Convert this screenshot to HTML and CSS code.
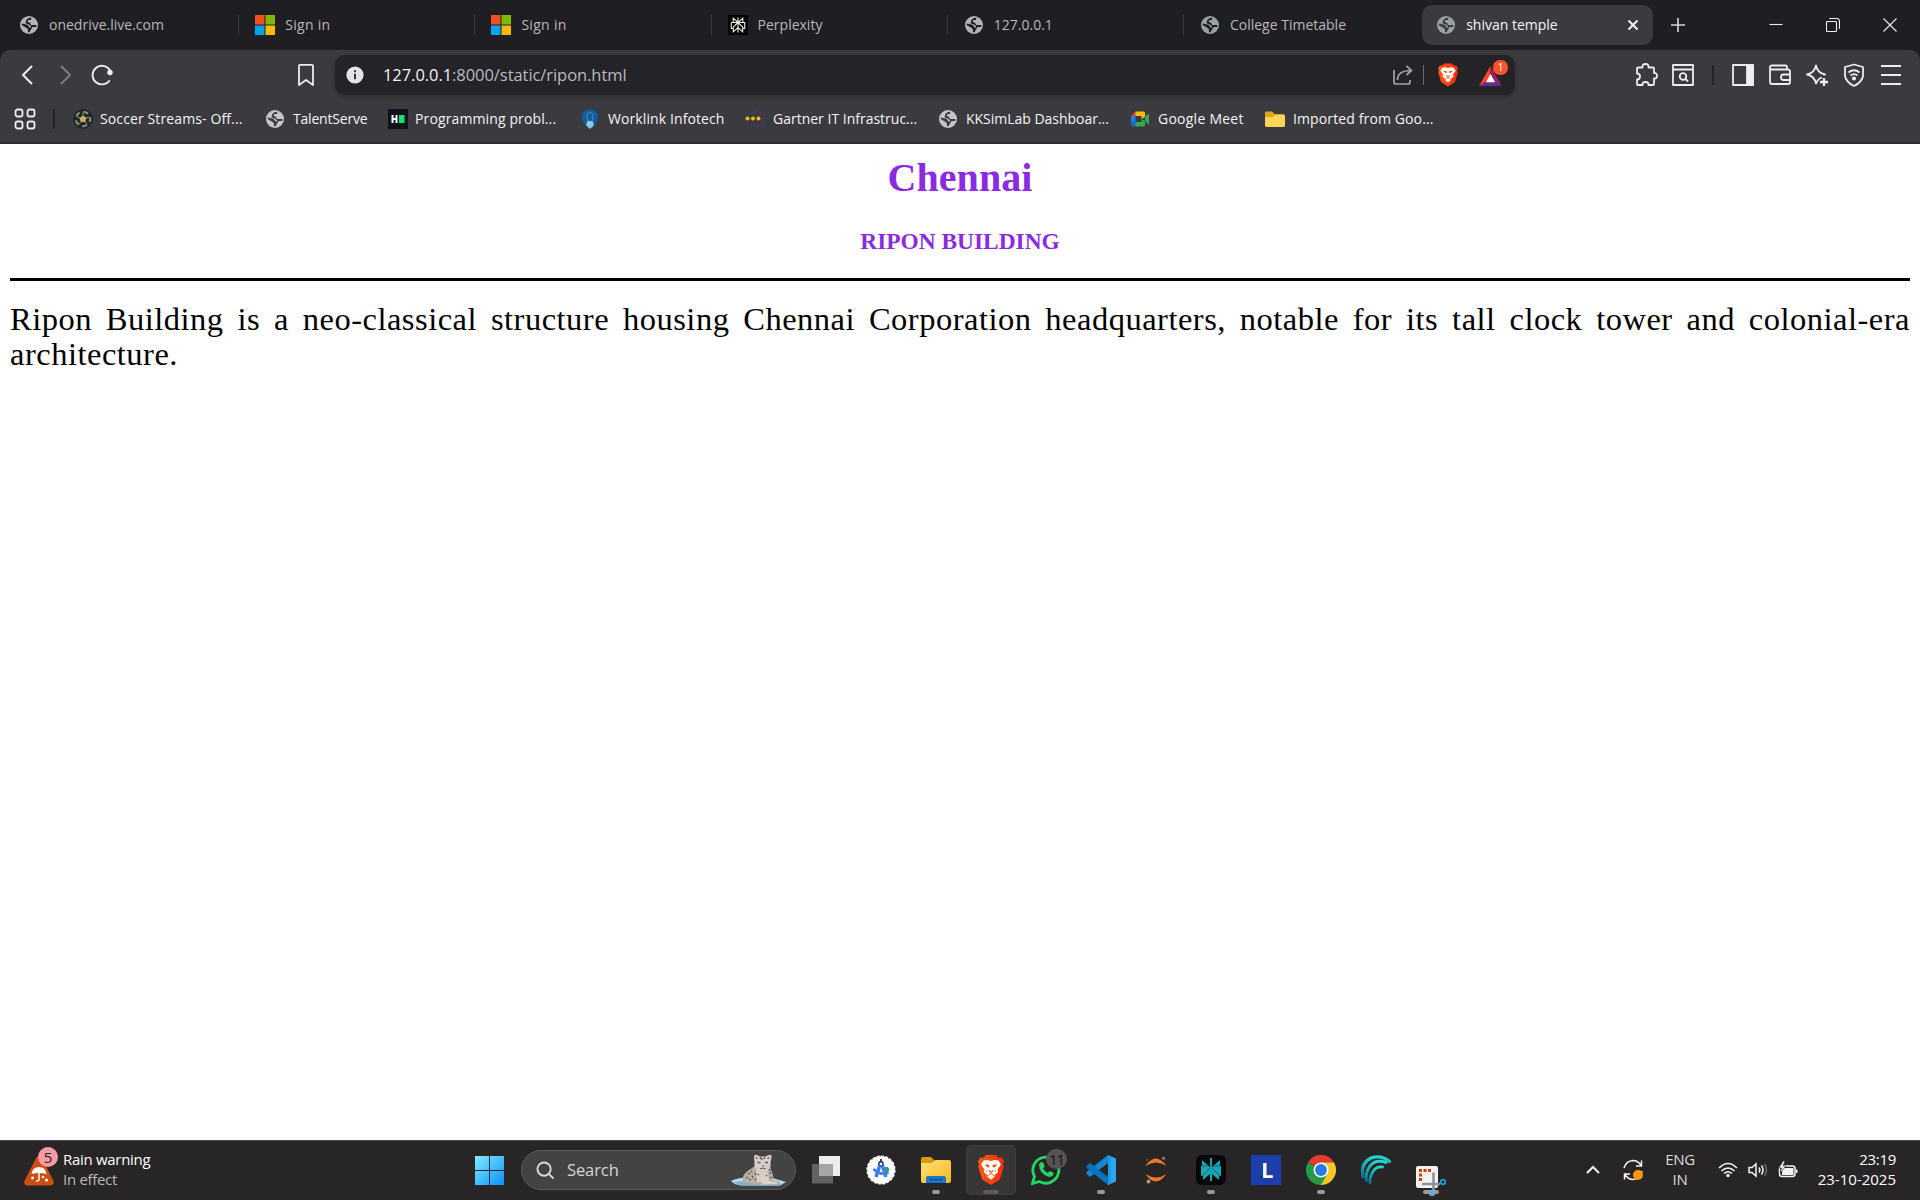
FILE: index.html
```html
<!DOCTYPE html>
<html lang="en">
<head>
<meta charset="utf-8">
<title>shivan temple</title>
<link rel="stylesheet" href="styles.css">
</head>
<body>
<svg class="defs" aria-hidden="true">
  <defs>
    <linearGradient id="win" x1="0" y1="0" x2="1" y2="1"><stop offset="0" stop-color="#7eeeff"/><stop offset="1" stop-color="#0a8fff"/></linearGradient>
    <linearGradient id="fold" x1="0" y1="0" x2="1" y2="1"><stop offset="0" stop-color="#ffe07a"/><stop offset="1" stop-color="#f8b81c"/></linearGradient>
    <linearGradient id="lion" x1="0" y1="0" x2="1" y2="0"><stop offset="0" stop-color="#ff5a10"/><stop offset="1" stop-color="#ff2a0c"/></linearGradient>
    <linearGradient id="teal" x1="0" y1="0" x2="0" y2="1"><stop offset="0" stop-color="#22d6d2"/><stop offset="1" stop-color="#08708c"/></linearGradient>
    <symbol id="globe" viewBox="0 0 20 20">
      <circle cx="10" cy="10" r="9" fill="currentColor"/>
      <path d="M12.500 2.800 11.800 5H9.500L8.500 7l2.500.8 1 2.200h5.500l-.3 2h-3.700l-1.500 2.500-1.500 2.700H9l-.2-3.200-2-1.500L2.600 10l.3-1.500 5.600 1.300 2 2.700h1.200l.4-1.200L9.800 9.500 6.500 8.200 7.300 5l2.500-2z" fill="var(--cut)"/>
    </symbol>
    <symbol id="ms" viewBox="0 0 20 20"><path fill="#f25022" d="M0 0h9.500v9.500H0z"/><path fill="#7fba00" d="M10.500 0H20v9.500h-9.500z"/><path fill="#00a4ef" d="M0 10.500h9.500V20H0z"/><path fill="#ffb900" d="M10.500 10.500H20V20h-9.500z"/></symbol>
    <symbol id="pplx" viewBox="0 0 20 20"><path d="M10 2.500v15M5.200 3.200 10 7.500l4.800-4.300v4.300H5.200zM3.300 7.500H10l-4.700 4.700v4.600L10 12.500l4.700 4.300v-4.600L10 7.500h6.700v6h-2M3.300 7.500v6h2" fill="none" stroke="currentColor" stroke-width="1.100"/></symbol>
    <symbol id="brave" viewBox="0 0 26 30">
      <path d="M8 0h10l2.500 2.800 3-.3L26 6l-1 3 .6 3-3.800 12.500L13 30 4.200 24.500.4 12 1 9 0 6l2.500-3.500 3 .3z" fill="url(#lion)"/>
      <path d="M5.500 5.500 9.500 5l3.500 1 3.500-1 4 .5 2.500 4-3.500 5 .7 2.400-3.800 3.600-2-1.500L13 18l-1.400 1-2 1.500-3.800-3.600.7-2.400-3.500-5zM9 21.500l4-2.500 4 2.500-4 3.300z" fill="#fff"/>
      <path d="m6.500 9.500 4.500.3.500 1.700-1.500 1.200zM19.500 9.500l-4.500.3-.5 1.700 1.500 1.200zM10.500 14.800 13 16.500l2.500-1.700-.5 2-2 1-2-1zM8 14.800l1.200 1.500-.7 1zM18 14.800l-1.200 1.500.7 1z" fill="#ff480f"/>
    </symbol>
  </defs>
</svg>

<header class="browser">
  <div class="tabstrip">
    <div class="tab"><svg class="fav grey"><use href="#globe"/></svg><span>onedrive.live.com</span></div>
    <div class="tab"><svg class="fav"><use href="#ms"/></svg><span class="wide">Sign in</span></div>
    <div class="tab"><svg class="fav"><use href="#ms"/></svg><span class="wide">Sign in</span></div>
    <div class="tab"><svg class="fav black"><use href="#pplx"/></svg><span>Perplexity</span></div>
    <div class="tab"><svg class="fav grey"><use href="#globe"/></svg><span>127.0.0.1</span></div>
    <div class="tab last"><svg class="fav blue"><use href="#globe"/></svg><span>College Timetable</span></div>
    <div class="tab active"><svg class="fav blue"><use href="#globe"/></svg><span>shivan temple</span>
      <svg class="x" viewBox="0 0 12 12"><path d="m1.500 1.500 9 9m0-9-9 9"/></svg></div>
    <svg class="plus" viewBox="0 0 16 16"><path d="M8 1v14M1 8h14"/></svg>
    <div class="winbtns">
      <svg viewBox="0 0 14 14"><path d="M.5 6.500h13"/></svg>
      <svg viewBox="0 0 14 14"><path d="M1.500 3.500h8q1 0 1 1v8q0 1-1 1h-8q-1 0-1-1v-8q0-1 1-1zM3.500 1q0-.5 1-.5h6q3 0 3 3v6q0 1-.7 1.200"/></svg>
      <svg viewBox="0 0 14 14"><path d="m.5.5 13 13m0-13-13 13"/></svg>
    </div>
  </div>

  <div class="panel">
    <div class="toolbar">
      <svg class="ic back" viewBox="0 0 24 24"><path d="M16 3 7 12l9 9"/></svg>
      <svg class="ic fwd" viewBox="0 0 24 24"><path d="m8 3 9 9-9 9"/></svg>
      <svg class="ic reload" viewBox="0 0 24 24"><path d="M20.500 8.500a9.300 9.300 0 1 0-.8 8.700"/><circle cx="20" cy="9.500" r="2.700" fill="#f0f0f2" stroke="none"/></svg>
      <svg class="ic mark" viewBox="0 0 24 24"><path d="M6 1.800h12q1 0 1 1V22l-7-5-7 5V2.800q0-1 1-1z"/></svg>
      <div class="url">
        <svg class="info" viewBox="0 0 18 18"><circle cx="9" cy="9" r="8.600" fill="#e4e3e8"/><path d="M9 7.800v5.500M9 4.200v2" stroke="#242328" stroke-width="1.800"/></svg>
        <span class="address"><b>127.0.0.1</b>:8000/static/ripon.html</span>
        <svg class="share" viewBox="0 0 22 22"><path d="M2 6v12q0 2 2 2h12q2 0 2-2v-2M5.500 16q0-9.500 13.500-9.500M14.500 2l5 4.500-5 4.500"/></svg>
        <i class="bar"></i>
        <svg class="shield"><use href="#brave"/></svg>
        <div class="bat"><svg viewBox="0 0 24 21"><path d="M12 0 0 21l12-7z" fill="#ff4724"/><path d="m12 0 12 21-12-7z" fill="#9e1f63"/><path d="m0 21 7-4.500h10l7 4.500z" fill="#662d91"/><path d="m12 8.500 4.800 8.500H7.200z" fill="#fff"/></svg><em>1</em></div>
      </div>
      <div class="actions">
        <svg class="ic" viewBox="0 0 24 24"><path d="M4 4.500h4.500q-.5-3.500 3-3.500t3 3.500H19q1 0 1 1V10q3-.3 3 2.800T20 15.500V21q0 1-1 1h-4.500q.300-3-3-3t-3 3H4q-1 0-1-1v-4.500q3 0 3-3T3 10.500v-5q0-1 1-1z"/></svg>
        <svg class="ic" viewBox="0 0 24 24"><path d="M2 2h20v20H2zM2 6.500h20"/><circle cx="12" cy="13.500" r="3.300"/><path d="m14.500 16 2.500 2.500"/></svg>
        <i class="div"></i>
        <svg class="ic" viewBox="0 0 24 24"><path d="M2 2h20v20H2z"/><path d="M16 2h6v20h-6z" fill="#f0f0f2"/></svg>
        <svg class="ic" viewBox="0 0 24 24"><path d="M19 6.500V4q0-1.500-1.500-1.500H4q-2 0-2 2V19q0 2 2 2h16q2 0 2-2V8.500q0-2-2-2H2.500M22 17h-6.500q-2.500 0-2.500-2.500v-.5q0-2.500 2.500-2.500H22"/></svg>
        <svg class="ic" viewBox="0 0 24 24"><path d="M17 14.500q-4 1-6 6-1.700-7.500-9-9 7.500-1.500 9-9 1.500 7.500 9 9-1 .3-1.500.5"/><path d="M19 15v8M15 19h8" stroke-width="2.300"/></svg>
        <svg class="ic" viewBox="0 0 24 24"><path d="M12 1.500 21 4v9q-1 6-9 10-8-4-9-10V4z"/><path d="M6.500 9.500q5.500-4.500 11 0M8.500 12.500q3.500-2.800 7 0"/><circle cx="12" cy="15.500" r="1.200" fill="#f0f0f2"/></svg>
        <svg class="ic menu" viewBox="0 0 24 24"><path d="M2 3h20M2 12h20M2 21h20"/></svg>
      </div>
    </div>

    <nav class="bookmarks">
      <svg class="apps" viewBox="0 0 22 22"><rect x="1.500" y="1.500" width="7" height="7" rx="2"/><rect x="13.500" y="1.500" width="7" height="7" rx="2"/><rect x="1.500" y="13.500" width="7" height="7" rx="2"/><rect x="13.500" y="13.500" width="7" height="7" rx="2"/></svg>
      <i class="div"></i>
      <a class="bm w1"><svg class="fav" viewBox="0 0 20 20"><circle cx="10" cy="10" r="10" fill="#142a35"/><circle cx="10" cy="10" r="7.200" fill="none" stroke="#a8924c" stroke-width="2" stroke-dasharray="5 4.050" stroke-dashoffset="2"/><path d="m10 6.500 3.500 2.500-1.300 4H7.800L6.500 9z" fill="#c9ad5d"/><path d="M10 7V3.500M13 9l3-1M12 12.500l2 3M8 12.500l-2 3M7 9 4 8" stroke="#a8924c"/></svg><span>Soccer Streams- Off...</span></a>
      <a class="bm w2"><svg class="fav light"><use href="#globe"/></svg><span>TalentServe</span></a>
      <a class="bm w3"><svg class="fav" viewBox="0 0 20 20"><path d="M0 0h20v20H0z" fill="#0b141c"/><path d="M4.500 6v8M8.500 6v8M4.500 10h4" stroke="#fff" stroke-width="2"/><path d="M11 6h5.500v8H11z" fill="#12e36b"/></svg><span>Programming probl...</span></a>
      <a class="bm w4"><svg class="fav" viewBox="0 0 20 20"><path d="M10 0q8 1 8 8 0 5-4 8l-1 3H8l-2-3q-4-3-4-8 0-7 8-8z" fill="#105e9d"/><path d="M10 3.500q-3 0-3 5l1.500 5h3l1.500-5q0-5-3-5z" fill="none" stroke="#4f93c6"/><path d="M7.500 12h5L14 16l-4 4-4-4z" fill="#8ccbe8"/></svg><span>Worklink Infotech</span></a>
      <a class="bm w5"><svg class="fav" viewBox="0 0 20 20"><path d="M6 4q6-3.500 10 0 3 3 1.500 8L18 17l-4-1q-5 1-8-1" fill="none" stroke="#4c3869" stroke-width="1.300"/><g fill="#e9bd12"><circle cx="2.500" cy="9.500" r="2"/><circle cx="8" cy="9.500" r="2"/><circle cx="13.500" cy="9.500" r="2"/></g></svg><span>Gartner IT Infrastruc...</span></a>
      <a class="bm w6"><svg class="fav light"><use href="#globe"/></svg><span>KKSimLab Dashboar...</span></a>
      <a class="bm w7"><svg class="fav" viewBox="0 0 20 20"><path d="M1 7h4.500v6H1z" fill="#2878ef"/><path d="M1 7 5.500 2.500V7z" fill="#ea4335"/><path d="M5.500 2.500h8q1.500 0 1.500 1.500v4l-3.500 2V7h-6z" fill="#fbbc04"/><path d="M1 12.500h4.500v5H3q-2 0-2-2z" fill="#1967d2"/><path d="M5.500 13h6v-3L15 12v4q0 1.500-1.500 1.500h-8zM15 8l3-3q1-.5 1 .5v9q0 1-1 .5l-3-3z" fill="#34a853"/></svg><span>Google Meet</span></a>
      <a class="bm w8"><svg class="fav" viewBox="0 0 20 20"><path d="M0 4q0-1.500 1.500-1.500H7L9.500 5H18q2 0 2 2v9q0 2-2 2H2q-2 0-2-2z" fill="#e2a51d"/><path d="M0 8h8l2-2h8q2 0 2 2v8q0 2-2 2H2q-2 0-2-2z" fill="#ffd65a"/></svg><span>Imported from Goo...</span></a>
    </nav>
  </div>
</header>

<main class="page">
  <h1>Chennai</h1>
  <h3>RIPON BUILDING</h3>
  <hr>
  <p>Ripon Building is a neo-classical structure housing Chennai Corporation headquarters, notable for its tall clock tower and colonial-era architecture.</p>
</main>

<footer class="taskbar">
  <div class="weather">
    <div class="warn"><svg viewBox="0 0 30 30"><path d="M12 2q3-4 6 0l11.500 23q1 4-3 4.500h-23q-4-.5-3-4.500z" fill="#cb500f"/><path d="M7.500 18q1-7 7.500-7t7.500 7q-7-2-15 0z" fill="#fff"/><path d="M15 17v6q0 2.500-3 2" fill="none" stroke="#fff" stroke-width="1.500"/><circle cx="8.500" cy="22" r="1.400" fill="#fff"/><circle cx="19" cy="21" r="1.300" fill="#fff"/><circle cx="22.500" cy="24" r="1.600" fill="#fff"/></svg><em>5</em></div>
    <div class="wtext"><span>Rain warning</span><span class="dim">In effect</span></div>
  </div>

  <svg class="start" viewBox="0 0 29 29"><path d="M0 0h14v14H0zM15 0h14v14H15zM0 15h14v14H0zM15 15h14v14H15z" fill="url(#win)"/></svg>

  <div class="search">
    <svg class="lens" viewBox="0 0 20 20"><circle cx="8.500" cy="8.500" r="7"/><path d="m13.500 13.500 5 5"/></svg>
    <span>Search</span>
    <svg class="cat" viewBox="0 0 56 32">
      <path d="M0 27q8-4 17-3.500h23l15 4.500-6 3.500H10q-7-1-10-4.500z" fill="#b9dcea"/>
      <path d="M2 28q12-2 20 1t29 0l-3 2.500H10z" fill="#7fb3cc"/>
      <path d="M12 27q-1-7 6-11l6-4h14q5 8 4 14l6 1q2 2-1 3.500H29L12 28z" fill="#b9aea4"/>
      <path d="M25 14h11l2 14H26z" fill="#d8cfc7"/>
      <path d="M23 4q0-4 3-3l3 1.500h5L38 1q3-1 2.500 3l-1 4q1 8-4 9.500h-7q-6-2-5-9.500z" fill="#d6cdc6"/>
      <path d="m24.500 3.500 2 1M38.500 3.500l-2 1M29 3l1 2M34 3l-1 2M17 19l2 1M15 23l2 1M20 17l1 1M21 22l1 2M40 18l-1 2M41 23l-2 1M27 20l1 1M35 21l1 1M31 4v2M18 25l2 1M24 19l1 2M38 15l1 2M24 25l1 1" stroke="#5e534e" stroke-width="1.200"/>
      <path d="M26.500 8.500h3M34 8.500h3" stroke="#416982" stroke-width="1.600"/>
      <path d="m30.500 11.500 1.500 1.500 1.500-1.500z" fill="#cf5965"/><path d="M29 15q3-2 6 0" fill="none" stroke="#675650"/>
      <path d="M30 28q-1-3 3-3.500 4 0 5 2.500l8 1q1 2-2 2H32z" fill="#ddd2c8"/>
    </svg>
  </div>

  <div class="apps-row">
    <div class="app"><svg viewBox="0 0 30 30"><path d="M8 1h21v20H8z" fill="#ededed"/><path d="M1 9h21v19.500H1z" fill="#626262"/><path d="M8 9h14v12H8z" fill="#a5a5a5"/></svg></div>
    <div class="app"><svg viewBox="0 0 30 30"><circle cx="15" cy="15" r="13.800" fill="#fff" stroke="#fff" stroke-width="1.600" stroke-dasharray="3 1.300"/><path d="M19 12h3l1.500 3-2 3h-3z" fill="#2ba24c"/><path d="m14.500 8-4.500 14M15.500 8 20 22" stroke="#3c80ed" stroke-width="3.600"/><path d="M7.500 14q7 7 15 3.500" fill="none" stroke="#3c80ed" stroke-width="2.600"/><circle cx="15" cy="8.500" r="2.700" fill="#2b4169"/><circle cx="15" cy="9" r="1.300" fill="#fff"/><path d="M15 4v3" stroke="#2b4169" stroke-width="2"/></svg></div>
    <div class="app run"><svg viewBox="0 0 30 30"><path d="M0 4q0-2 2-2h8l3 3v6H0z" fill="#d99a0c"/><path d="M0 8h11l3-3h14q2 0 2 2v19q0 2-2 2H2q-2 0-2-2z" fill="url(#fold)"/><path d="M5 28v-5q0-2 2-2h16q2 0 2 2v5z" fill="#1978cb"/><path d="M9 24.500h12" stroke="#0c4a8b" stroke-width="1.200"/></svg></div>
    <div class="app current"><svg viewBox="0 0 26 30"><use href="#brave"/></svg></div>
    <div class="app"><svg viewBox="0 0 30 30"><path d="m1.500 28.500 2-7A13 13 0 1 1 8.500 26.500z" fill="none" stroke="#25d366" stroke-width="2.800"/><path d="m8 9 2-2 2.200.5 1.500 4-1.700 2q1.500 3 4.700 4.500l1.800-2 4 1.800q.5 4-4.500 4.200Q8 19 8 9z" fill="#25d366"/></svg><em>11</em></div>
    <div class="app run"><svg viewBox="0 0 30 30"><path d="m22 0 8 3.500v23L22 30z" fill="#2ba6f2"/><path d="M22 0v8L4 22l-3.500-3v-2z" fill="#1487d1"/><path d="M22 30v-8L4 8 .5 11v2z" fill="#0873bd"/><path d="m22 0 3 1.500v27L22 30z" fill="#2199e8"/></svg></div>
    <div class="app"><svg viewBox="0 0 30 30"><path d="M4.500 11q10-15 21 0-10.500-7-21 0zM4.500 19q10 15 21 0-10.500 7-21 0z" fill="#f37726"/><circle cx="22.500" cy="3.200" r="1.700" fill="#767677"/><circle cx="6" cy="5" r="1" fill="#616262"/><circle cx="7.500" cy="26.500" r="1.900" fill="#9e9e9e"/></svg></div>
    <div class="app run"><svg viewBox="0 0 30 30"><rect width="30" height="30" rx="6" fill="#050708"/><path d="m6 5 8 7V3h2v9l8-7v6h1v10h-2v4l-7-6v7h-2v-7l-7 6v-4H5V11h1z" fill="#18a5b3"/><path d="m6 21 8-8M24 21l-8-8M6 11h18" stroke="#0b5661" stroke-width=".8"/></svg></div>
    <div class="app"><svg viewBox="0 0 30 30"><path d="M0 0h30v30H0z" fill="#1d3fae"/><path d="m8.500 23 2.500-3V8l3 1v12h7v2z" fill="#0d263f"/></svg><strong>L</strong></div>
    <div class="app run"><svg viewBox="0 0 30 30"><path d="M15 15 2 7.500A15 15 0 0 1 28 7.500z" fill="#e33b2e"/><path d="M15 15V7.500h13A15 15 0 0 1 15 30z" fill="#fdc727"/><path d="M15 15 21.500 18.800 15 30A15 15 0 0 1 2 7.500z" fill="#279a48"/><circle cx="15" cy="15" r="7.500" fill="#fff"/><circle cx="15" cy="15" r="5.900" fill="#2878e9"/></svg></div>
    <div class="app"><svg viewBox="0 0 30 30"><g fill="none" stroke="url(#teal)" stroke-linecap="round"><path d="M28.500 6.500Q20-.5 10 3-1 9 2 22" stroke-width="3.200"/><path d="M25 7.500Q15 4 9 11q-5 7-3.500 14.500" stroke-width="3"/><path d="M21.500 12q-6-1-9.500 4.500T9 28" stroke-width="2.800"/></g></svg></div>
    <div class="app snip"><svg viewBox="0 0 30 30"><rect width="22" height="22" rx="2" fill="#f2f2f2"/><path d="M4.500 15V4.500H16" fill="none" stroke="#d83b01" stroke-width="3" stroke-dasharray="3 1.500"/><path d="M17.500 6.500V24M6 18h18" stroke="#8d959c" stroke-width="2.600"/><circle cx="27" cy="16" r="2.300" fill="none" stroke="#2199e2" stroke-width="1.800"/><circle cx="16" cy="27" r="2.300" fill="none" stroke="#58b5ef" stroke-width="1.800"/></svg></div>
  </div>

  <div class="tray">
    <svg class="chev" viewBox="0 0 14 14"><path d="m1 10 6-6 6 6"/></svg>
    <svg class="sync" viewBox="0 0 22 22"><path d="M2 9q2-7 9-7.500 5 0 8 5M19.500 1.500V7H14M20 12q-2 8-9 8.500-5 0-8-5M2.500 20.500V15H8"/><circle cx="16" cy="16" r="5" fill="#ff9800" stroke="none"/></svg>
    <div class="lang"><span>ENG</span><span>IN</span></div>
    <svg class="net" viewBox="0 0 20 16"><path d="M1 6q9-9 18 0M3.500 9q6.500-6 13 0M6 11.500q4-3.500 8 0"/><circle cx="10" cy="13.500" r="1.700" fill="#f3f3f3" stroke="none"/></svg>
    <svg class="vol" viewBox="0 0 20 16"><path d="M1 5.500h3L8 2v12l-4-3.500H1zM11 5.500q1.800 2.500 0 5M13.500 3.500q3.200 4.500 0 9"/><path d="M16.500 2q4 6 0 12" stroke="#6b696a"/></svg>
    <svg class="batt" viewBox="0 0 20 18"><rect x="1.500" y="5" width="15.500" height="10.500" rx="2.500"/><path d="M5 7h10.500v7H4q-.5-4 1-7zM18 8.500h1.500v3.500H18z" fill="#f3f3f3" stroke="none"/><path d="M5 0 1 7h2.500L2 12l6-7H5l2-5z" fill="#f3f3f3" stroke="#272526" stroke-width=".6"/></svg>
    <div class="clock"><span>23:19</span><span class="date">23-10-2025</span></div>
  </div>
</footer>
</body>
</html>
```
FILE: styles.css
```css
* { box-sizing: border-box; }
html, body { margin: 0; height: 100%; }
body {
  display: flex;
  flex-direction: column;
  height: 1200px;
  overflow: hidden;
  background: #fff;
  font: 14px/20px "Open Sans", "Noto Sans", sans-serif;
}
svg { flex: none; display: block; }
em { font-style: normal; }
.defs { position: absolute; width: 0; height: 0; }

/* Browser frame */
.browser { flex: none; height: 144px; background: #1f1e23; color: #b8b7ba; }
.tabstrip { display: flex; align-items: center; height: 50px; padding-left: 3px; }
.tab {
  display: flex;
  align-items: center;
  gap: 10px;
  width: 236.200px;
  height: 20px;
  padding-left: 16px;
  border-right: 1px solid #3b3a3f;
  letter-spacing: 0;
}
.wide { letter-spacing: .3px; }
.tab.last { border-color: transparent; }
.tab.active {
  width: 231px;
  height: 40px;
  margin-left: 2px;
  padding: 0 14px;
  border: 0;
  border-radius: 10px;
  background: #3b3a3f;
  color: #f4f4f5;
}
.fav { width: 20px; height: 20px; --cut: #1f1e23; }
.active .fav { --cut: #3b3a3f; }
.grey { color: #b3b3b3; }
.blue { color: #9aa0a6; }
.light { color: #c4c7ca; }
.black { background: #000; color: #eee; }
.x { width: 12px; height: 12px; margin-left: auto; stroke: #f4f4f5; stroke-width: 2; }
.plus { width: 16px; height: 16px; margin-left: 17px; stroke: #d8d8da; stroke-width: 1.6; }
.winbtns { display: flex; gap: 43px; margin-left: 83px; }
.winbtns svg { width: 14px; height: 14px; fill: none; stroke: #eee; stroke-width: 1.1; }

.panel {
  height: 94px;
  border-bottom: 2px solid #2e2d32;
  border-radius: 10px 10px 0 0;
  background: #3b3a3f;
}
.toolbar { display: flex; align-items: center; height: 50px; padding-left: 16px; }
.ic { width: 24px; height: 24px; fill: none; stroke: #ecebef; stroke-width: 1.8; stroke-linejoin: round; }
.back { stroke-width: 2.1; }
.fwd { margin-left: 13px; stroke: #817f86; }
.reload { margin-left: 13px; stroke-width: 1.9; }
.mark { margin-left: 180px; }
.url {
  display: flex;
  align-items: center;
  width: 1180px;
  height: 40px;
  margin-left: 17px;
  padding-left: 11px;
  border-radius: 10px;
  background: #242328;
  box-shadow: 0 2px 5px rgba(0, 0, 0, .25);
}
.info { width: 18px; height: 18px; }
.address { width: 749px; margin-left: 19px; color: #bbb9c0; font-size: 16.500px; letter-spacing: -.06px; flex: none; }
.address b { color: #f2f2f4; font-weight: 400; }
.share { width: 22px; height: 22px; margin-left: 260px; fill: none; stroke: #a4a3a8; stroke-width: 1.700; }
.bar { width: 1px; height: 20px; margin-left: 9px; background: #6b6a70; }
.shield { width: 20px; height: 26px; margin-left: 14px; }
.bat { position: relative; margin: 2px 0 0 21px; }
.bat svg { width: 23px; height: 20px; }
.bat em {
  position: absolute;
  left: 14px;
  top: -6px;
  width: 15px;
  height: 15px;
  border-radius: 7px;
  background: #fb542b;
  color: #fff;
  font-size: 10px;
  line-height: 15px;
  text-align: center;
}
.actions { display: flex; align-items: center; gap: 13.200px; margin-left: 119px; }
.div { width: 2px; height: 20px; background: #25242a; }
.actions .div { margin: 0 3.500px; }
.menu { stroke-width: 2; }

.bookmarks { display: flex; align-items: center; height: 38px; padding-left: 14px; color: #f4f4f5; }
.apps { width: 22px; height: 22px; fill: none; stroke: #ecebef; stroke-width: 1.8; }
.bookmarks > .div { margin: 0 18px 0 17px; }
.bm { display: flex; align-items: center; gap: 8px; white-space: nowrap; letter-spacing: 0; }
.bm .fav { --cut: #3b3a3f; }
.w1 { width: 192px; gap: 7px; letter-spacing: .12px; }
.w2 { width: 123px; letter-spacing: -.2px; }
.w3 { width: 192px; gap: 7px; letter-spacing: .12px; }
.w4 { width: 165px; letter-spacing: .1px; }
.w5 { width: 193px; }
.w6 { width: 192px; letter-spacing: -.02px; }
.w7 { width: 135px; letter-spacing: .25px; }
.w8 { letter-spacing: .12px; }

/* Document */
.page { flex: 1; padding: 0 10px; color: #000; font-family: "Liberation Serif", serif; }
h1, h3 { color: #8a2be2; text-align: center; }
h1 { margin: 11px 0 0; font-size: 40px; line-height: 46px; letter-spacing: .1px; }
h3 { margin: 26px 0 0; font-size: 23.400px; line-height: 28px; }
hr { height: 3px; margin: 23px 0 0; border: 0; background: #000; }
p { margin: 21px 0 0; font-size: 32.500px; line-height: 35px; letter-spacing: .5px; text-align: justify; }

/* Taskbar */
.taskbar {
  display: flex;
  align-items: center;
  flex: none;
  height: 60px;
  border-top: 1px solid #454344;
  background: #272526;
  color: #fff;
  font-size: 15px;
}
.weather { display: flex; align-items: center; gap: 9px; width: 451px; padding-left: 24px; }
.warn { position: relative; }
.warn svg { width: 30px; height: 30px; }
.warn em {
  position: absolute;
  left: 14px;
  top: -9px;
  width: 20px;
  height: 20px;
  border-radius: 50%;
  background: #ff99a4;
  color: #222;
  line-height: 20px;
  text-align: center;
}
.wtext, .lang, .clock { display: flex; flex-direction: column; padding-bottom: 4px; letter-spacing: -.3px; }
.dim { color: #b9b7b8; }
.start { width: 29px; height: 29px; margin: 0 0 1px 24px; }
.search {
  display: flex;
  align-items: center;
  width: 275px;
  height: 40px;
  margin: 0 0 1px 17px;
  padding: 0 8px 0 14px;
  border: 1px solid #5b5959;
  border-radius: 20px;
  background: #444343;
  color: #d6d4d5;
  font-size: 16.500px;
  letter-spacing: -.1px;
}
.lens { width: 19px; height: 19px; margin-right: 12px; fill: none; stroke: #d8d8d8; stroke-width: 2; }
.cat { width: 56px; height: 32px; margin-left: auto; }
.apps-row { display: flex; gap: 5px; margin: 0 0 1px 5px; }
.app { position: relative; display: grid; place-items: center; width: 50px; height: 50px; border-radius: 5px; }
.app svg { width: 30px; height: 30px; }
.run::after, .current::after, .snip::after {
  content: "";
  position: absolute;
  bottom: 1px;
  left: 21px;
  width: 8px;
  height: 4px;
  border-radius: 2px;
  background: #9b999a;
}
.current { background: #373536; box-shadow: inset 0 0 0 1px #3e3c3d; }
.current::after { left: 17px; width: 16px; background: #5c5a5b; }
.snip { padding-top: 21px; }
.snip::after { left: 17px; width: 16px; }
.snip svg { z-index: 1; }
.app em {
  position: absolute;
  left: 25px;
  top: 4px;
  width: 21px;
  height: 20px;
  border-radius: 10px;
  background: #555354;
  color: #111;
  letter-spacing: -1px;
  text-align: center;
}
.app strong { position: absolute; left: 20px; top: 14px; font-size: 22px; line-height: 20px; }
.tray { display: flex; align-items: center; width: 464px; padding: 0 0 1px 130px; }
.tray svg { fill: none; stroke: #f3f3f3; stroke-width: 1.5; }
.tray .chev { width: 14px; height: 14px; stroke-width: 2; }
.tray .sync { width: 22px; height: 22px; margin-left: 22px; }
.lang { width: 32px; margin-left: 20px; padding-bottom: 2px; align-items: center; color: #dcdadb; }
.net { width: 20px; height: 16px; margin-left: 22px; }
.vol { width: 20px; height: 16px; margin-left: 10px; }
.batt { width: 20px; height: 18px; margin-left: 10px; }
.clock { width: 86px; margin-left: 12px; padding-bottom: 2px; align-items: flex-end; }
.date { letter-spacing: 0; }
```
